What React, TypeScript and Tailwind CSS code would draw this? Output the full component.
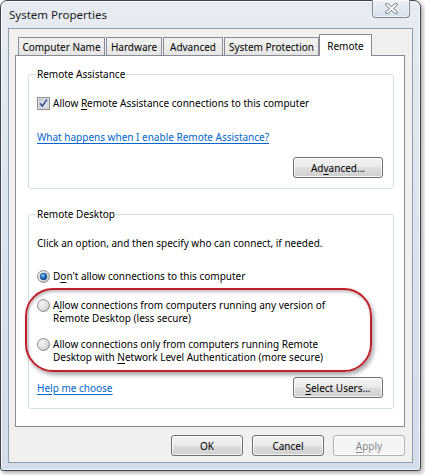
import React from "react";

function CheckBox() {
  return (
    <svg width="13" height="13" viewBox="0 0 13 13" className="shrink-0">
      <defs>
        <linearGradient id="cbFill" x1="0" y1="0" x2="1" y2="1">
          <stop offset="0" stopColor="#c9cfdb" />
          <stop offset="1" stopColor="#eef1f6" />
        </linearGradient>
      </defs>
      <rect x="0.5" y="0.5" width="12" height="12" fill="#f6f6f6" stroke="#8e8f8f" />
      <rect x="2" y="2" width="9" height="9" fill="url(#cbFill)" stroke="#b4b9c2" strokeWidth="0.8" />
      <path d="M3.2 6.3 L5.3 9.2 L9.9 2.6" stroke="#3f528a" strokeWidth="1.6" fill="none" strokeLinejoin="round" />
    </svg>
  );
}

function Radio({ checked }: { checked?: boolean }) {
  const id = checked ? "rOn" : "rOff";
  return (
    <svg width="13" height="13" viewBox="0 0 13 13" className="shrink-0">
      <defs>
        <radialGradient id={id + "Bg"} cx="0.35" cy="0.35" r="0.7">
          <stop offset="0" stopColor="#f4f4f4" />
          <stop offset="0.7" stopColor="#dedede" />
          <stop offset="1" stopColor="#bdbdbd" />
        </radialGradient>
        <radialGradient id={id + "Dot"} cx="0.4" cy="0.35" r="0.65">
          <stop offset="0" stopColor="#a9dcfb" />
          <stop offset="0.45" stopColor="#2d7fce" />
          <stop offset="1" stopColor="#0e3a78" />
        </radialGradient>
      </defs>
      <circle cx="6.5" cy="6.5" r="6" fill={`url(#${id}Bg)`} stroke="#8e8f8f" />
      {checked && <circle cx="6.5" cy="6.5" r="3.4" fill={`url(#${id}Dot)`} stroke="#1b4f8f" strokeWidth="0.6" />}
    </svg>
  );
}

function WinButton({
  children,
  disabled,
  className,
}: {
  children: React.ReactNode;
  disabled?: boolean;
  className?: string;
}) {
  const look = disabled
    ? "border-[#adb2b5] bg-[#f4f4f4] text-[#8a8a8a]"
    : "border-[#707070] bg-[linear-gradient(180deg,#f2f2f2_0%,#ebebeb_48%,#dddddd_52%,#cfcfcf_100%)] text-black";
  return (
    <div
      className={`flex h-[21px] items-center justify-center whitespace-nowrap rounded-[3px] border shadow-[inset_0_0_0_1px_rgba(255,255,255,0.75)] ${look} ${className ?? ""}`}
    >
      {children}
    </div>
  );
}

function Tab({ label, w, selected }: { label: string; w: string; selected?: boolean }) {
  if (selected) {
    return (
      <div
        className={`relative z-10 flex h-[22px] items-start justify-center whitespace-nowrap border border-b-0 border-[#898c95] bg-white pt-[3px] ${w}`}
      >
        {label}
      </div>
    );
  }
  return (
    <div
      className={`flex h-[19px] items-center justify-center whitespace-nowrap border border-b-0 border-[#898c95] bg-[linear-gradient(180deg,#f2f2f2,#e4e4e4)] pb-[1px] ${w}`}
    >
      {label}
    </div>
  );
}

function U({ children }: { children: React.ReactNode }) {
  return <span className="underline decoration-1 underline-offset-[2px]">{children}</span>;
}

export default function App() {
  return (
    <div className="relative h-[475px] w-[425px] overflow-hidden bg-white font-['Noto_Sans',sans-serif] text-[10px] leading-[16px] text-black">
      {/* dialog window with glass frame */}
      <div className="flex h-[471px] w-[421px] flex-col rounded-t-[7px] rounded-b-[3px] border border-[#3e4651] bg-[linear-gradient(180deg,#e7ecf2_0%,#dce5ee_40%,#d3deea_100%)] px-[7px] pb-[7px] shadow-[inset_0_0_0_1px_rgba(255,255,255,0.7),2px_2px_4px_rgba(0,0,0,0.35)]">
        {/* title bar */}
        <div className="flex h-[27px] shrink-0 items-start">
          <div className="mt-[6px] pl-[1px] text-[11.5px] leading-[16px] text-[#1b1b1b]">System Properties</div>
          <div className="ml-auto mr-[3px] mt-[-1px] flex h-[18px] w-[38px] items-center justify-center rounded-b-[4px] border border-t-0 border-[#7f8a97] bg-[linear-gradient(180deg,#eef2f7,#d5dee9)] shadow-[inset_0_0_0_1px_rgba(255,255,255,0.6)]">
            <svg width="13" height="11" viewBox="0 0 13 11">
              <path d="M2 1.5 L11 9.5 M11 1.5 L2 9.5" stroke="#6c747e" strokeWidth="3.4" strokeLinecap="round" />
              <path d="M2 1.5 L11 9.5 M11 1.5 L2 9.5" stroke="#ffffff" strokeWidth="1.8" strokeLinecap="round" />
            </svg>
          </div>
        </div>

        {/* dialog body */}
        <div className="flex flex-1 flex-col border border-[#8f9cab] bg-[#f0f0f0]">
          {/* tab strip */}
          <div className="-mb-[1px] mt-[5px] flex h-[22px] items-end pl-[9px]">
            <Tab label="Computer Name" w="w-[87px] mr-[1px]" />
            <Tab label="Hardware" w="w-[56px] mr-[1px]" />
            <Tab label="Advanced" w="w-[60px] mr-[1px]" />
            <Tab label="System Protection" w="w-[95px]" />
            <Tab label="Remote" w="w-[53px]" selected />
          </div>

          {/* tab page */}
          <div className="ml-[6px] flex h-[372px] w-[390px] flex-col border border-[#898c95] bg-white pl-[12px] pr-[10px] pt-[10px]">
            <fieldset className="rounded-[3px] border border-[#d5dfe5] pb-[10px] pl-[7px] pr-[10px]">
              <legend className="px-[1px] leading-[16px]">Remote Assistance</legend>
              <div className="ml-[1px] mt-[13px] flex items-center gap-[3px]">
                <CheckBox />
                <span>
                  Allow <U>R</U>emote Assistance connections to this computer
                </span>
              </div>
              <div className="ml-[1px] mt-[18px] text-[#0066cc] underline decoration-1 underline-offset-[2px]">
                What happens when I enable Remote Assistance?
              </div>
              <div className="mt-[12px] flex justify-end">
                <WinButton className="w-[90px]">
                  <span>
                    Ad<U>v</U>anced...
                  </span>
                </WinButton>
              </div>
            </fieldset>

            <fieldset className="mt-[17px] rounded-[3px] border border-[#d5dfe5] pb-[10px] pl-[7px] pr-[10px]">
              <legend className="px-[1px] leading-[16px]">Remote Desktop</legend>
              <div className="ml-[1px] mt-[13px]">Click an option, and then specify who can connect, if needed.</div>
              <div className="ml-[1px] mt-[17px] flex items-center gap-[3px]">
                <Radio checked />
                <span>
                  D<U>o</U>n't allow connections to this computer
                </span>
              </div>
              <div className="ml-[1px] mt-[15px] flex items-start gap-[3px] leading-[13px]">
                <Radio />
                <span>
                  A<U>l</U>low connections from computers running any version of
                  <br />
                  Remote Desktop (less secure)
                </span>
              </div>
              <div className="ml-[1px] mt-[13px] flex items-start gap-[3px] leading-[13px]">
                <Radio />
                <span>
                  Allow connections only from computers running Remote
                  <br />
                  Desktop with <U>N</U>etwork Level Authentication (more secure)
                </span>
              </div>
              <div className="ml-[1px] mt-[13px] flex items-center justify-between">
                <span className="text-[#0066cc] underline decoration-1 underline-offset-[2px]">Help me choose</span>
                <WinButton className="w-[90px]">
                  <span>
                    <U>S</U>elect Users...
                  </span>
                </WinButton>
              </div>
            </fieldset>
          </div>

          {/* dialog buttons */}
          <div className="mt-[8px] flex justify-end gap-[9px] pr-[7px]">
            <WinButton className="w-[72px]">OK</WinButton>
            <WinButton className="w-[72px]">Cancel</WinButton>
            <WinButton className="w-[72px]" disabled>
              <span>
                <U>A</U>pply
              </span>
            </WinButton>
          </div>
        </div>
      </div>

      {/* red callout around the two secure-connection options */}
      <div className="pointer-events-none absolute left-[25px] top-[288px] h-[84px] w-[347px] rounded-[28px] border-2 border-[#c0202b] shadow-[2px_3px_4px_rgba(0,0,0,0.35),inset_1px_2px_3px_rgba(0,0,0,0.25)]" />
    </div>
  );
}
